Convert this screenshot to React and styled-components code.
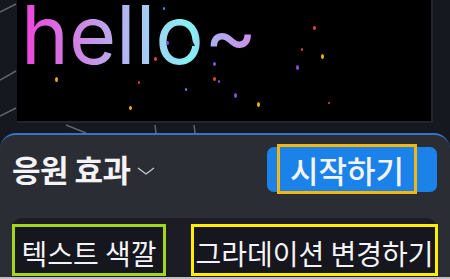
import React from "react";
import styled, { createGlobalStyle } from "styled-components";

const GlobalStyle = createGlobalStyle`
  html, body {
    margin: 0;
    padding: 0;
    background: #161820;
  }
  * {
    box-sizing: border-box;
  }
`;

const Screen = styled.div`
  position: relative;
  width: 450px;
  height: 279px;
  overflow: hidden;
  display: flex;
  flex-direction: column;
  background: #161820;
  font-family: "Noto Sans CJK KR", "Noto Sans", sans-serif;
`;

const Backdrop = styled.svg`
  position: absolute;
  inset: 0;
  pointer-events: none;
`;

const Stage = styled.div`
  position: relative;
  height: 123px;
  flex: none;
  padding: 0 17px 0 17px;
  display: flex;
`;

const Canvas = styled.div`
  position: relative;
  flex: 1;
  background: #000;
  border-right: 2px solid #222530;
  border-bottom: 2px solid #222530;
`;

const Hello = styled.div`
  margin: -3px 0 0 4px;
  font-family: Inter, "Liberation Sans", sans-serif;
  font-size: 81px;
  font-weight: 400;
  line-height: 0.95;
  letter-spacing: 0;
  display: inline-block;
  background: linear-gradient(
    90deg,
    #ef41dc 0%,
    #c98fe6 28%,
    #a9c6f2 50%,
    #86f1f3 72%,
    #a9b0f0 80%,
    #d28ae6 100%
  );
  -webkit-background-clip: text;
  background-clip: text;
  color: transparent;
`;

const Dot = styled.span`
  position: absolute;
  width: ${(p) => p.$w}px;
  height: ${(p) => p.$h}px;
  border-radius: 50%;
  background: ${(p) => p.$c};
`;

const Pointer = styled.span`
  position: absolute;
  left: 172px;
  top: 40px;
  width: 0;
  height: 0;
  border-left: 3px solid transparent;
  border-right: 3px solid transparent;
  border-bottom: 6px solid #111;
`;

const Panel = styled.div`
  position: relative;
  margin-top: 10px;
  flex: 1;
  background: #2b2d35;
  border-top: 2px solid #3574c9;
  border-radius: 16px 16px 0 0;
  display: flex;
  flex-direction: column;
`;

const HeaderRow = styled.div`
  display: flex;
  align-items: center;
  justify-content: space-between;
  height: 66px;
  flex: none;
  padding: 0 13px 0 12px;
`;

const Title = styled.button`
  display: flex;
  align-items: center;
  gap: 6px;
  padding: 0;
  border: 0;
  background: none;
  color: #f4f4f6;
  font-family: inherit;
  font-size: 31px;
  font-weight: 700;
  letter-spacing: -0.5px;
`;

const StartButton = styled.button`
  width: 170px;
  height: 45px;
  display: flex;
  align-items: center;
  padding: 0 0 0 10px;
  border: 0;
  border-radius: 7px;
  background: #1a82e8;
  font-family: inherit;
  margin-top: 2px;
`;

const Outline = styled.span`
  display: flex;
  align-items: center;
  justify-content: center;
  height: ${(p) => p.$h}px;
  width: ${(p) => p.$w}px;
  padding-top: ${(p) => p.$shift || 0}px;
  border: 3px solid ${(p) => p.$color};
  background: ${(p) => p.$bg || "transparent"};
  color: #f4f4f6;
  font-size: ${(p) => p.$size}px;
  font-weight: ${(p) => p.$weight || 400};
  white-space: nowrap;
  flex: none;
`;

const Options = styled.div`
  margin: 17px 13px 0 12px;
  flex: 1;
  background: #1b1c24;
  border-radius: 10px 10px 0 0;
  display: flex;
  align-items: flex-start;
  gap: 25px;
  padding-top: 6px;
`;

const BottomStrip = styled.div`
  height: 2px;
  flex: none;
  background: #bdbdc2;
`;

const dots = [
  [146, 7, "#3aa8ee", 2, 3],
  [149, 41, "#8a4fd6", 3, 4],
  [137, 57, "#e2473b", 3, 4],
  [38, 77, "#f2a91a", 3, 5],
  [121, 81, "#e2473b", 2, 3],
  [196, 62, "#8a4fd6", 3, 4],
  [196, 77, "#e2473b", 3, 4],
  [201, 80, "#8a4fd6", 2, 3],
  [168, 88, "#3aa8ee", 2, 3],
  [217, 93, "#8a4fd6", 3, 5],
  [112, 106, "#f2a91a", 3, 4],
  [240, 102, "#f2a91a", 3, 5],
  [296, 26, "#e2473b", 3, 4],
  [284, 48, "#e2473b", 2, 3],
  [304, 54, "#f2a91a", 3, 5],
  [279, 65, "#8a4fd6", 3, 5],
  [311, 102, "#e2473b", 2, 2],
];

function Chevron() {
  return (
    <svg width="18" height="10" viewBox="0 0 18 10" style={{ marginTop: 6 }}>
      <path d="M1 2l8 6 8-6" fill="none" stroke="#c9cad0" strokeWidth="1.3" />
    </svg>
  );
}

export default function App() {
  return (
    <>
      <GlobalStyle />
      <Screen>
        <Backdrop width="450" height="279" viewBox="0 0 450 279">
          <g stroke="#60636e" strokeWidth="1.5">
            <line x1="0" y1="12" x2="16" y2="4" />
            <line x1="0" y1="80" x2="16" y2="71" />
            <line x1="0" y1="116" x2="16" y2="108" />
            <line x1="66" y1="125" x2="86" y2="133" />
            <line x1="155" y1="125" x2="156" y2="133" />
            <line x1="194" y1="125" x2="195" y2="133" />
          </g>
        </Backdrop>
        <Stage>
          <Canvas>
            <Hello>hello~</Hello>
            <Pointer />
            {dots.map(([x, y, c, w, h], i) => (
              <Dot key={i} $c={c} $w={w} $h={h} style={{ left: x, top: y }} />
            ))}
          </Canvas>
        </Stage>
        <Panel>
          <HeaderRow>
            <Title>
              응원 효과
              <Chevron />
            </Title>
            <StartButton>
              <Outline $color="#f5b60f" $w={140} $h={50} $size={31} $weight={500}>
                시작하기
              </Outline>
            </StartButton>
          </HeaderRow>
          <Options>
            <Outline $color="#a3d71c" $w={154} $h={52} $size={28} $shift={5} $bg="#15161e">
              텍스트 색깔
            </Outline>
            <Outline $color="#ffee00" $w={247} $h={52} $size={28} $shift={5} $bg="#15161e">
              그라데이션 변경하기
            </Outline>
          </Options>
        </Panel>
        <BottomStrip />
      </Screen>
    </>
  );
}
